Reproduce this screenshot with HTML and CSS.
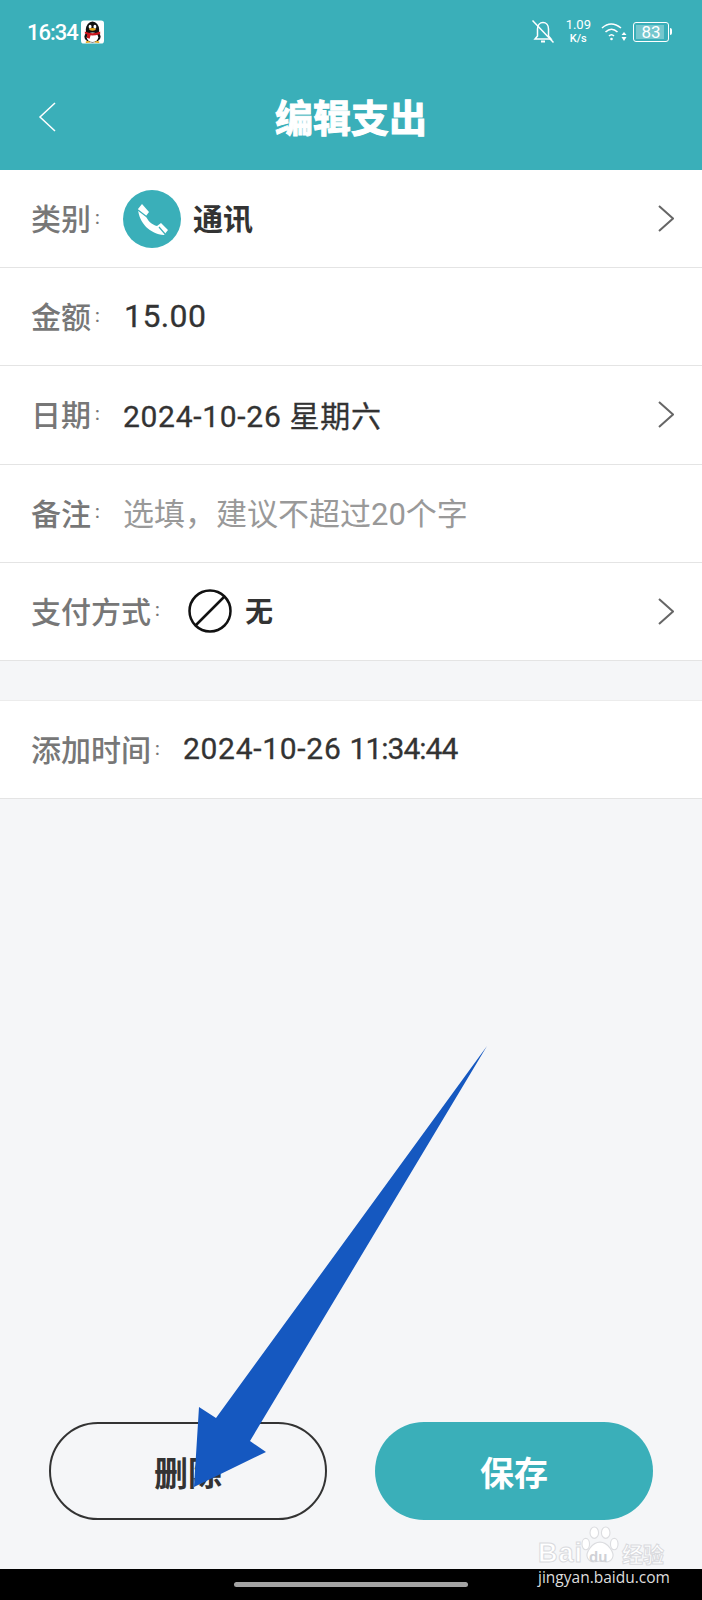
FILE: index.html
```html
<!DOCTYPE html>
<html lang="zh">
<head>
    <meta charset="UTF-8">
    <meta name="viewport" content="width=device-width, initial-scale=1.0">
    <title>编辑支出</title>
    <link rel="stylesheet" href="styles.css">
</head>
<body>

<div class="screen">
    <!-- Barra de estado + titulo -->
    <div class="header">
        <div class="status-bar">
            <span class="clock">16:34</span>
            <svg class="qq" viewBox="0 0 24 24">
                <rect width="24" height="24" rx="3" fill="#fff"/>
                <ellipse cx="12" cy="10" rx="7" ry="9" fill="#111"/>
                <ellipse cx="12" cy="17" rx="8.5" ry="6" fill="#111"/>
                <ellipse cx="12" cy="17.5" rx="6" ry="5" fill="#fff"/>
                <ellipse cx="9.5" cy="6.5" rx="1.5" ry="2" fill="#fff"/>
                <ellipse cx="14.5" cy="6.5" rx="1.5" ry="2" fill="#fff"/>
                <ellipse cx="12" cy="9.2" rx="3.4" ry="1.4" fill="#e8a91c"/>
                <path d="M4 11.5 Q12 15 20 11.5 L20 14 Q14 16 10 15.5 L9 19 L6 18 L6.5 14.5 Q5 14 4 13.5 Z" fill="#c8161d"/>
                <path d="M5 22 Q8 20.5 10 23 L5 23.5 Z M19 22 Q16 20.5 14 23 L19 23.5 Z" fill="#e8a91c"/>
            </svg>
            <div class="status-right">
                <svg class="bell" viewBox="0 0 24 26" fill="none" stroke="#fff" stroke-width="1.5">
                    <path d="M4 20 L6.5 17 V10 C6.5 6 9 3.5 12 3.5 C15 3.5 17.5 6 17.5 10 V17 L20 20 Z"/>
                    <path d="M10 22.5 H14" stroke-width="2"/>
                    <path d="M1.5 1.5 L22.5 23.5"/>
                </svg>
                <div class="speed"><span>1.09</span><span class="unit">K/s</span></div>
                <svg class="wifi" viewBox="0 0 26 22" fill="none" stroke="#fff" stroke-width="1.6">
                    <path d="M1 7 Q10 -1 20 7"/>
                    <path d="M4.5 11 Q10.5 5.5 16.5 11"/>
                    <path d="M8 15 Q10.5 12.5 13 15"/>
                    <circle cx="10.5" cy="18" r="1.3" fill="#fff" stroke="none"/>
                    <path d="M23 11 L25.5 14 H20.5 Z M23 20 L25.5 16 H20.5 Z" fill="#fff" stroke="none"/>
                </svg>
                <div class="battery"><div class="battery-fill"></div><span>83</span></div>
            </div>
        </div>
        <div class="nav">
            <svg class="back" viewBox="0 0 18 30" fill="none" stroke="#fff" stroke-width="1.5">
                <path d="M17 1 L2 15 L17 29"/>
            </svg>
            <h1>编辑支出</h1>
        </div>
    </div>

    <!-- Formulario -->
    <div class="group">
        <div class="row">
            <span class="label">类别<i>:</i></span>
            <svg class="cat-icon" viewBox="0 0 58 58">
                <circle cx="29" cy="29" r="29" fill="#3aafb9"/>
                <path d="M15 19 L19 14 L26 22 L23 26 C24 30 29 35 34 36 L38 33 L45 40 L41 45 C27 44 16 33 15 19 Z" fill="#fff"/>
                <path d="M15 20 L24 27 M36 37 L42 44" stroke="#3aafb9" stroke-width="1.2"/>
            </svg>
            <span class="cat-name">通讯</span>
            <svg class="chevron" viewBox="0 0 16 27" fill="none" stroke="#666" stroke-width="2">
                <path d="M1 1 L15 13.5 L1 26"/>
            </svg>
        </div>
        <div class="row">
            <span class="label">金额<i>:</i></span>
            <span class="amount">15.00</span>
        </div>
        <div class="row">
            <span class="label">日期<i>:</i></span>
            <span class="value">2024-10-26 星期六</span>
            <svg class="chevron" viewBox="0 0 16 27" fill="none" stroke="#666" stroke-width="2">
                <path d="M1 1 L15 13.5 L1 26"/>
            </svg>
        </div>
        <div class="row">
            <span class="label">备注<i>:</i></span>
            <span class="placeholder">选填，建议不超过20个字</span>
        </div>
        <div class="row">
            <span class="label">支付方式<i>:</i></span>
            <svg class="none-icon" viewBox="0 0 44 44" fill="none" stroke="#111" stroke-width="2.5">
                <circle cx="22" cy="22" r="20.5"/>
                <path d="M7.5 36.5 L36.5 7.5"/>
            </svg>
            <span class="cat-name none-name">无</span>
            <svg class="chevron" viewBox="0 0 16 27" fill="none" stroke="#666" stroke-width="2">
                <path d="M1 1 L15 13.5 L1 26"/>
            </svg>
        </div>
    </div>

    <div class="group second">
        <div class="row">
            <span class="label">添加时间<i>:</i></span>
            <span class="value">2024-10-26 <span class="time">11:34:44</span></span>
        </div>
    </div>

    <!-- Botones -->
    <div class="actions">
        <button class="btn btn-delete">删除</button>
        <button class="btn btn-save">保存</button>
    </div>

    <div class="home-bar"><div class="home-pill"></div></div>

    <!-- Marca de agua -->
    <div class="watermark">
        <svg class="paw" viewBox="0 0 40 40" fill="#fff" stroke="#dcdde0" stroke-width="1.2">
            <ellipse cx="5" cy="19" rx="4" ry="6"/>
            <ellipse cx="14" cy="7" rx="4.5" ry="6"/>
            <ellipse cx="26" cy="7" rx="4.5" ry="6"/>
            <ellipse cx="35" cy="19" rx="4" ry="6"/>
            <path d="M20 17 C28 17 36 28 33 34 C30 40 24 37 20 37 C16 37 10 40 7 34 C4 28 12 17 20 17 Z"/>
        </svg>
        <div class="wm-line">
            <span class="wm-bai">Bai</span>
            <span class="wm-du">du</span>
            <span class="wm-jy">经验</span>
        </div>
        <div class="wm-url">jingyan.baidu.com</div>
    </div>

    <!-- Flecha encima del boton -->
    <svg class="arrow" viewBox="0 0 702 1600">
        <path d="M487 1046 L250 1441 L266 1452 L194 1487 L199 1407 L216 1418 Z" fill="#1558c0"/>
    </svg>
</div>

</body>
</html>
```

FILE: styles.css
```css
* {
    box-sizing: border-box;
}
body {
    margin: 0;
    font-family: Roboto, "Noto Sans CJK SC", sans-serif;
    background-color: #f5f6f8;
}
.screen {
    position: relative;
    width: 702px;
    height: 1600px;
    display: flex;
    flex-direction: column;
    overflow: hidden;
}
.header {
    height: 170px;
    background: #3aafb9;
    color: #fff;
}
.status-bar {
    height: 64px;
    padding: 0 33px 0 27px;
    display: flex;
    align-items: center;
}
.clock {
    font-size: 22px;
    font-weight: 500;
    letter-spacing: -1px;
}
.qq {
    width: 23px;
    height: 24px;
    margin-left: 3px;
}
.status-right {
    margin-left: auto;
    display: flex;
    align-items: center;
}
.bell {
    width: 24px;
    height: 26px;
}
.speed {
    margin-left: 11px;
    display: flex;
    flex-direction: column;
    align-items: center;
    font-size: 13px;
    line-height: 14px;
}
.speed .unit {
    font-size: 11px;
    font-weight: 500;
}
.wifi {
    width: 26px;
    height: 22px;
    margin-left: 10px;
}
.battery {
    position: relative;
    width: 36px;
    height: 20px;
    margin-left: 6px;
    border: 1.5px solid #fff;
    border-radius: 3px;
    display: flex;
    align-items: center;
    justify-content: center;
    font-size: 17px;
}
.battery::after {
    content: "";
    position: absolute;
    right: -4px;
    top: 5px;
    width: 2px;
    height: 7px;
    background: #fff;
    border-radius: 0 2px 2px 0;
}
.battery-fill {
    position: absolute;
    left: 2px;
    top: 2px;
    bottom: 2px;
    width: 83%;
    background: rgba(255, 255, 255, .3);
}
.battery span {
    position: relative;
}
.nav {
    height: 106px;
    display: grid;
    grid-template-columns: 1fr auto 1fr;
    align-items: center;
    padding: 0 38px 4px;
}
.back {
    width: 18px;
    height: 30px;
    margin-top: 4px;
}
.nav h1 {
    margin: 0;
    font-size: 38px;
    font-weight: 700;
    -webkit-text-stroke: 1px #fff;
}
.group {
    background: #fff;
}
.second {
    margin-top: 39px;
    border-top: 1px solid #ececec;
}
.row {
    height: 98.2px;
    padding: 0 28px 0 31px;
    display: flex;
    align-items: center;
    border-bottom: 1px solid #e4e4e4;
}
.label {
    display: flex;
    align-items: center;
    padding-bottom: 3px;
    font-size: 30px;
    color: #777;
    font-weight: 500;
}
.label i {
    width: 32px;
    padding-left: 4px;
    font-style: normal;
    font-size: 18px;
}
.cat-icon {
    width: 58px;
    height: 58px;
}
.cat-name {
    margin-left: 12px;
    padding-bottom: 3px;
    font-size: 30px;
    font-weight: 700;
    color: #333;
}
.none-icon {
    width: 44px;
    height: 44px;
    margin-left: 5px;
}
.none-name {
    margin-left: 13px;
    font-size: 28px;
}
.amount {
    margin-left: 1px;
    padding-bottom: 2px;
    font-size: 32px;
    letter-spacing: .4px;
    color: #333;
    -webkit-text-stroke: .3px #333;
}
.value {
    padding-bottom: 2px;
    font-size: 30px;
    letter-spacing: .7px;
    color: #333;
    -webkit-text-stroke: .3px #333;
}
.time {
    letter-spacing: -1px;
}
.placeholder {
    padding-bottom: 3px;
    font-size: 31px;
    color: #999;
}
.chevron {
    width: 16px;
    height: 27px;
    margin-left: auto;
}
.actions {
    margin-top: auto;
    padding: 0 49px 49px;
    display: flex;
    justify-content: space-between;
}
.btn {
    width: 278px;
    height: 98px;
    border-radius: 49px;
    font-family: inherit;
    font-size: 34px;
    font-weight: 700;
}
.btn-delete {
    background: transparent;
    border: 2px solid #333;
    color: #333;
}
.btn-save {
    background: #3aafb9;
    border: none;
    color: #fff;
}
.home-bar {
    height: 31px;
    background: #000;
    display: flex;
    justify-content: center;
    padding-top: 13px;
}
.home-pill {
    width: 234px;
    height: 5px;
    border-radius: 3px;
    background: #a3a3a3;
}
.watermark {
    position: absolute;
    left: 538px;
    top: 1524px;
    width: 130px;
    height: 62px;
}
.paw {
    position: absolute;
    left: 43px;
    top: 0;
    width: 38px;
    height: 42px;
}
.wm-line {
    position: absolute;
    left: 0;
    top: 18px;
    width: 126px;
    height: 22px;
    line-height: 22px;
    display: flex;
    align-items: baseline;
    color: #fff;
    -webkit-text-stroke: 1px #d9dade;
}
.wm-bai {
    font-family: "Liberation Sans", sans-serif;
    font-size: 27px;
    font-weight: 700;
    letter-spacing: 1px;
}
.wm-du {
    margin-left: 6px;
    font-family: "Liberation Sans", sans-serif;
    font-size: 15px;
    font-weight: 700;
    color: #cfd1d6;
    -webkit-text-stroke: 0;
}
.wm-jy {
    margin-left: auto;
    font-size: 21px;
    font-weight: 700;
}
.wm-url {
    position: absolute;
    left: 0;
    top: 44px;
    font-family: "Open Sans", sans-serif;
    font-size: 15.5px;
    line-height: 18px;
    color: #ddd;
}
.arrow {
    position: absolute;
    left: 0;
    top: 0;
    width: 702px;
    height: 1600px;
    pointer-events: none;
}
```
